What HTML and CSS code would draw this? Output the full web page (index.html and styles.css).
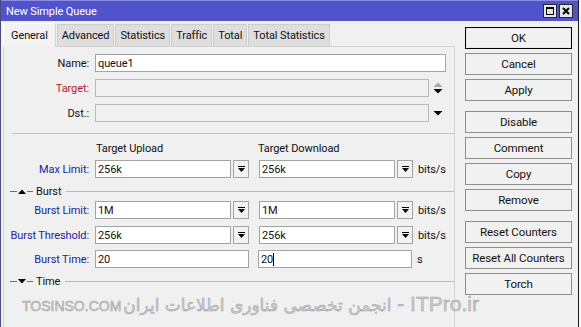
FILE: index.html
```html
<!DOCTYPE html>
<html>
<head>
<meta charset="utf-8">
<title>New Simple Queue</title>
<link rel="stylesheet" href="styles.css">
</head>
<body>
<div class="window">
  <div class="titlebar">
    <span class="title">New Simple Queue</span>
    <div class="tb-btns">
      <span class="tb-btn"><svg width="8" height="8" viewBox="0 0 8 8"><rect x="0.5" y="0.5" width="7" height="7" fill="none" stroke="#000"/><rect x="0" y="0" width="8" height="2" fill="#000"/></svg></span>
      <span class="tb-btn"><svg width="8" height="8" viewBox="0 0 8 8"><path d="M1 1 L7 7 M7 1 L1 7" stroke="#000" stroke-width="2"/></svg></span>
    </div>
  </div>
  <div class="content">
    <div class="main">
      <div class="tabs">
        <span class="tab active">General</span>
        <span class="tab">Advanced</span>
        <span class="tab">Statistics</span>
        <span class="tab">Traffic</span>
        <span class="tab">Total</span>
        <span class="tab">Total Statistics</span>
      </div>
      <div class="panel">
        <div class="row">
          <span class="lbl">Name:</span>
          <span class="field w-name">queue1</span>
        </div>
        <div class="row gap7">
          <span class="lbl red">Target:</span>
          <span class="field disabled w-target"></span>
          <svg class="spin" width="10" height="12" viewBox="0 0 10 12"><polygon points="0.5,5 5,0.5 9.5,5" fill="#a6a6a6"/><polygon points="0.5,7 9.5,7 5,11.5" fill="#000"/></svg>
        </div>
        <div class="row gap7">
          <span class="lbl">Dst.:</span>
          <span class="field disabled w-target"></span>
          <svg class="spin" width="10" height="12" viewBox="0 0 10 12"><polygon points="0.5,4 9.5,4 5,8.5" fill="#000"/></svg>
        </div>
        <div class="separator"></div>
        <div class="col-heads">
          <span class="col-head">Target Upload</span>
          <span class="col-head">Target Download</span>
        </div>
        <div class="row gap5">
          <span class="lbl blue">Max Limit:</span>
          <span class="field w-half">256k</span>
          <span class="dd"><svg width="7" height="6" viewBox="0 0 7 6"><rect x="0" y="0" width="7" height="1" fill="#000"/><polygon points="0,2 7,2 3.5,6" fill="#000"/></svg></span>
          <span class="field w-half second">256k</span>
          <span class="dd"><svg width="7" height="6" viewBox="0 0 7 6"><rect x="0" y="0" width="7" height="1" fill="#000"/><polygon points="0,2 7,2 3.5,6" fill="#000"/></svg></span>
          <span class="unit">bits/s</span>
        </div>
        <div class="section sec-burst">
          <span class="sl-a"></span>
          <svg class="tri" width="8" height="5" viewBox="0 0 8 5"><polygon points="0,5 4,0.5 8,5" fill="#000"/></svg>
          <span class="sl-b"></span>
          <span class="sec-title">Burst</span>
          <span class="sl-long"></span>
        </div>
        <div class="row gap3">
          <span class="lbl blue">Burst Limit:</span>
          <span class="field w-half">1M</span>
          <span class="dd"><svg width="7" height="6" viewBox="0 0 7 6"><rect x="0" y="0" width="7" height="1" fill="#000"/><polygon points="0,2 7,2 3.5,6" fill="#000"/></svg></span>
          <span class="field w-half second">1M</span>
          <span class="dd"><svg width="7" height="6" viewBox="0 0 7 6"><rect x="0" y="0" width="7" height="1" fill="#000"/><polygon points="0,2 7,2 3.5,6" fill="#000"/></svg></span>
          <span class="unit">bits/s</span>
        </div>
        <div class="row gap7">
          <span class="lbl blue">Burst Threshold:</span>
          <span class="field w-half">256k</span>
          <span class="dd"><svg width="7" height="6" viewBox="0 0 7 6"><rect x="0" y="0" width="7" height="1" fill="#000"/><polygon points="0,2 7,2 3.5,6" fill="#000"/></svg></span>
          <span class="field w-half second">256k</span>
          <span class="dd"><svg width="7" height="6" viewBox="0 0 7 6"><rect x="0" y="0" width="7" height="1" fill="#000"/><polygon points="0,2 7,2 3.5,6" fill="#000"/></svg></span>
          <span class="unit">bits/s</span>
        </div>
        <div class="row gap6">
          <span class="lbl blue">Burst Time:</span>
          <span class="field w-long">20</span>
          <span class="field w-long second-long">20<span class="caret"></span></span>
          <span class="unit">s</span>
        </div>
        <div class="section sec-time">
          <span class="sl-a"></span>
          <svg class="tri" width="8" height="5" viewBox="0 0 8 5"><polygon points="0,0 8,0 4,4.5" fill="#000"/></svg>
          <span class="sl-b"></span>
          <span class="sec-title">Time</span>
          <span class="sl-long"></span>
        </div>
      </div>
    </div>
    <div class="actions">
      <span class="btn ok">OK</span>
      <span class="btn">Cancel</span>
      <span class="btn">Apply</span>
      <span class="btn group">Disable</span>
      <span class="btn">Comment</span>
      <span class="btn">Copy</span>
      <span class="btn">Remove</span>
      <span class="btn group">Reset Counters</span>
      <span class="btn">Reset All Counters</span>
      <span class="btn">Torch</span>
    </div>
  </div>
  <div class="watermark">
    <span class="wm-site">TOSINSO.COM</span><span class="wm-fa">انجمن تخصصی فناوری اطلاعات ایران</span><span class="wm-en"> - ITPro.ir</span>
  </div>
</div>
</body>
</html>
```
FILE: styles.css
```css
* { box-sizing: border-box; }

body {
  margin: 0;
  background: #f6f6f6;
  font-family: Roboto, "Liberation Sans", sans-serif;
  font-size: 11px;
  letter-spacing: -0.1px;
  color: #111;
}

.window {
  position: relative;
  width: 579px;
  height: 327px;
  background: #f0f0f0;
  border-left: 1px solid #4b4b7a;
  border-right: 1px solid #1c1c1c;
  overflow: hidden;
}

.titlebar {
  height: 21px;
  background: #5053c9;
  border-top: 1px solid #8b8de2;
  display: flex;
  align-items: center;
  justify-content: space-between;
  padding: 0 5px 0 5px;
  color: #fff;
}

.title { font-size: 11px; }

.tb-btns { display: flex; gap: 2px; }

.tb-btn {
  width: 14px;
  height: 14px;
  background: #e6e6e6;
  border: 1px solid #2a2a2a;
  display: flex;
  align-items: center;
  justify-content: center;
}

.content {
  display: flex;
  gap: 10px;
  height: 306px;
}

.main {
  width: 454px;
  padding-left: 2px;
}

.tabs {
  display: flex;
  align-items: flex-end;
  gap: 1px;
  height: 25px;
  padding-top: 1px;
}

.tab {
  height: 22px;
  padding: 0 4px;
  background: #dedede;
  border: 1px solid #cdcdcd;
  border-bottom: none;
  display: flex;
  align-items: center;
}

.tab.active {
  height: 24px;
  background: #f3f3f3;
  border-color: #ffffff #d6d6d6 #f3f3f3 #ffffff;
  padding: 0 7px;
  margin-bottom: -1px;
  position: relative;
}

.panel {
  border: 1px solid #d3d3d3;
  border-bottom: none;
  height: 281px;
  padding-top: 7px;
}

.row {
  display: flex;
  align-items: center;
  height: 18px;
}

.gap3 { margin-top: 3px; }
.gap5 { margin-top: 5px; }
.gap6 { margin-top: 6px; }
.gap7 { margin-top: 7px; }

.lbl {
  width: 85px;
  margin-right: 6px;
  text-align: right;
  white-space: nowrap;
}

.red { color: #b3212b; }
.blue { color: #23239a; }

.field {
  height: 18px;
  border: 1px solid #a3a3a3;
  background: #fff;
  padding-left: 2px;
  display: flex;
  align-items: center;
}

.field.disabled {
  background: #f0f0f0;
  border-color: #b9b9b9;
}

.w-name { width: 351px; }
.w-target { width: 334px; }
.w-half { width: 136px; }
.w-long { width: 154px; }

.second { margin-left: 10px; }
.second-long { margin-left: 9px; }

.caret {
  display: inline-block;
  width: 1px;
  height: 13px;
  background: #000;
}

.spin { margin-left: 4px; }

.dd {
  width: 16px;
  height: 18px;
  margin-left: 2px;
  border: 1px solid #a3a3a3;
  background: #f2f2f2;
  display: flex;
  align-items: center;
  justify-content: center;
}

.unit { margin-left: 5px; }

.separator {
  height: 1px;
  background: #c4c4c4;
  margin: 11px 0 0 8px;
}

.col-heads {
  display: flex;
  padding-left: 92px;
  margin-top: 7px;
  height: 14px;
  align-items: center;
}

.col-head { width: 162px; }

.section {
  display: flex;
  align-items: center;
  height: 14px;
  padding-left: 6px;
}

.sec-burst { margin-top: 6px; }
.sec-time { margin-top: 6px; }

.sl-a { width: 7px; height: 1px; background: #6f6f6f; }
.tri { margin-left: 1px; }
.sl-b { width: 6px; height: 1px; background: #6f6f6f; margin-left: 1px; }
.sec-title { margin-left: 3px; }
.sl-long { flex: 1; height: 1px; background: #b9b9b9; margin-left: 5px; }

.actions {
  display: flex;
  flex-direction: column;
  gap: 4px;
  width: 107px;
  padding-top: 6px;
}

.btn {
  height: 22px;
  border: 1px solid #8e8e8e;
  background: #f1f1f1;
  display: flex;
  align-items: center;
  justify-content: center;
  white-space: nowrap;
  font-size: 11.5px;
}

.btn.ok { border-color: #000; box-shadow: inset 0 0 0 1px #e8e8e8; }
.btn.group { margin-top: 6px; }

.watermark {
  position: absolute;
  left: 21px;
  top: 292px;
  display: flex;
  align-items: baseline;
  white-space: nowrap;
  letter-spacing: 0;
  color: #cdcdcd;
  -webkit-text-stroke: 0.5px #a2a2a2;
}

.wm-site {
  font-family: "Liberation Sans", sans-serif;
  font-size: 14px;
}

.wm-fa {
  font-family: "DejaVu Sans", sans-serif;
  font-size: 17px;
  margin-left: 2px;
}

.wm-en {
  font-family: "Liberation Sans", sans-serif;
  font-size: 21px;
  white-space: pre;
}
```
